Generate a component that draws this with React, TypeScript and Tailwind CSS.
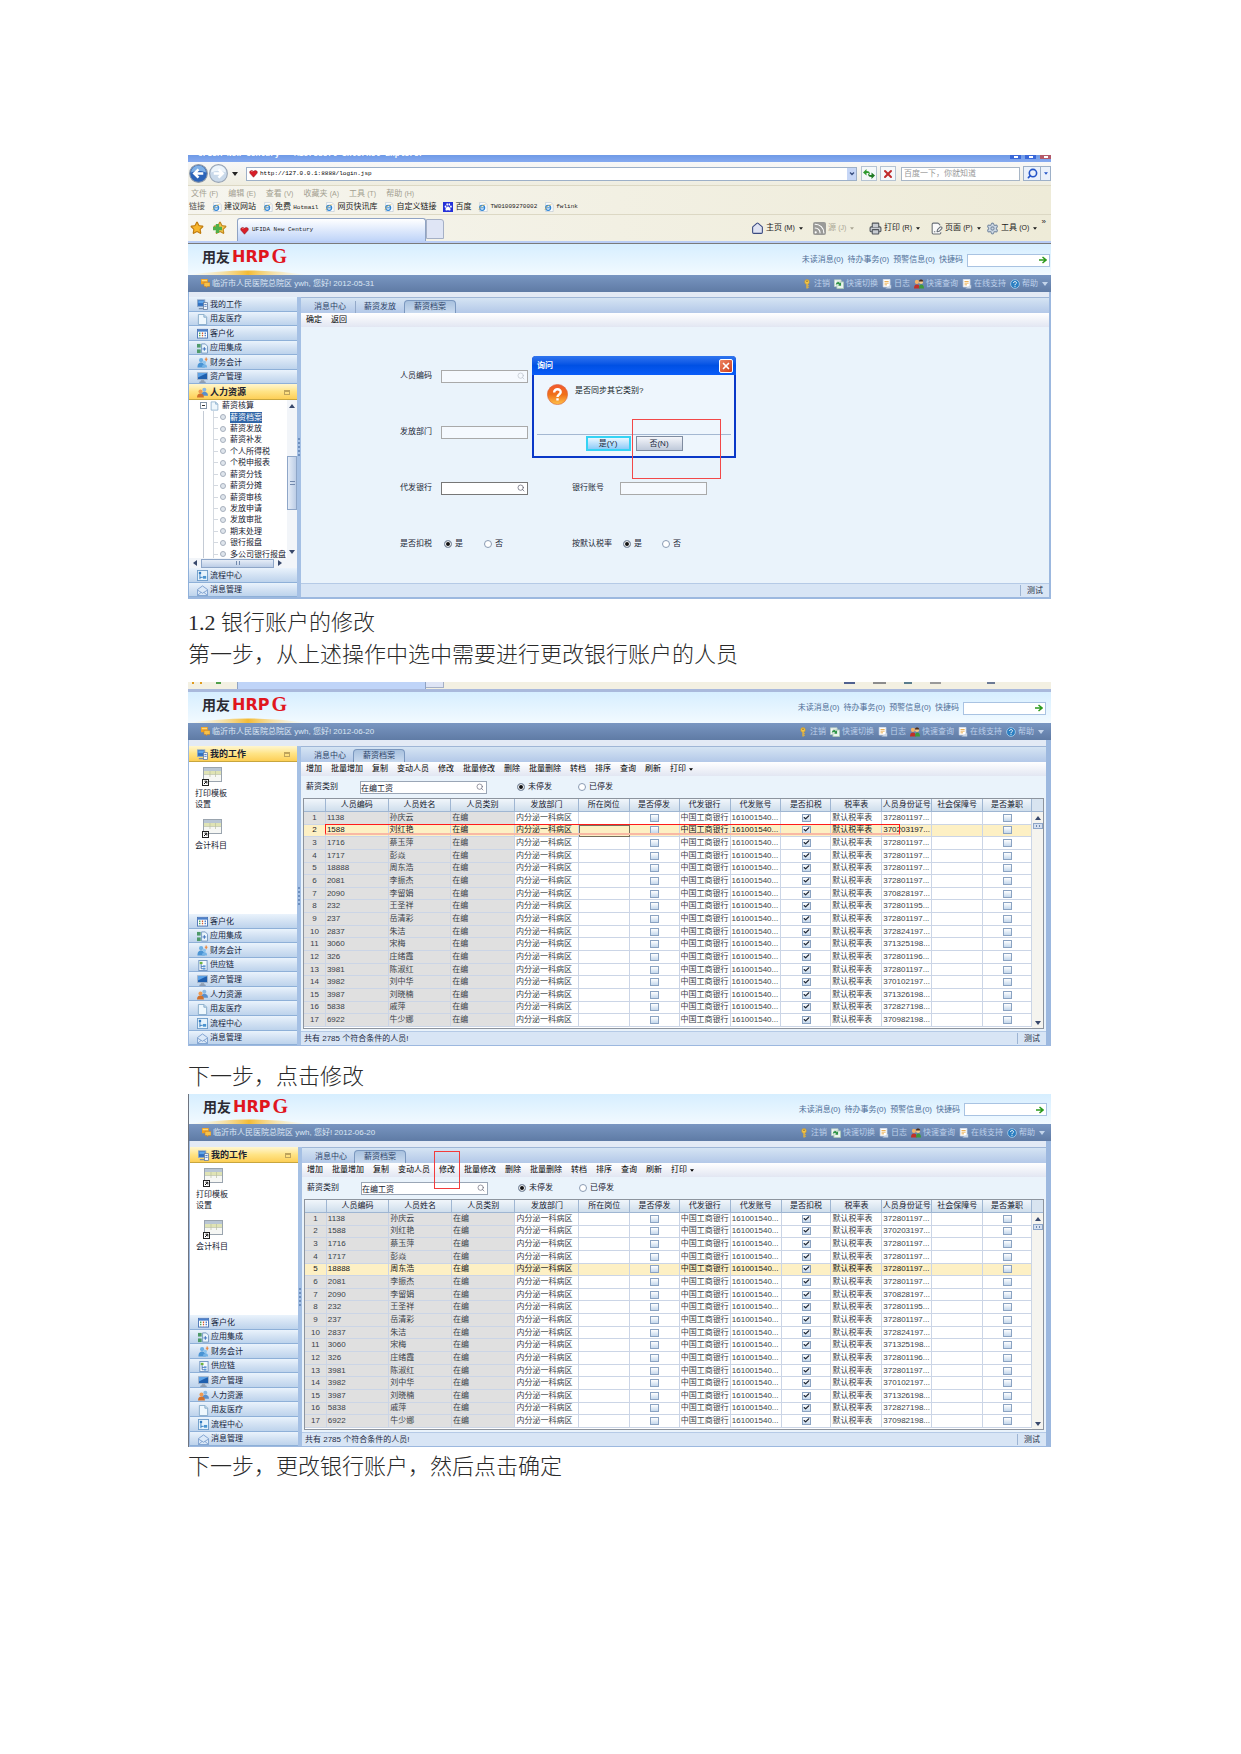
import React from 'react';
import { Home, Rss, Printer, Settings, FilePenLine, Search, Star, X, Check } from 'lucide-react';

type IconName =
  | 'work' | 'doc' | 'grid' | 'link' | 'finance' | 'supply' | 'asset' | 'people' | 'flow' | 'mail'
  | 'key' | 'switch' | 'note' | 'users' | 'help' | 'ie' | 'paw' | 'heart' | 'msg';

function Icon({ name, size = 'w-[11px] h-[11px]' }: { name: IconName; size?: string }) {
  const shapes: Record<IconName, React.ReactNode> = {
    work: (
      <>
        <rect x="0.5" y="1" width="8" height="7" fill="#2f6fc0" stroke="#8ba6c8" />
        <path d="M1.5 2h6v2.5h-6z" fill="#5fa4e8" />
        <rect x="7" y="4" width="4.5" height="7.5" fill="#f2f6fb" stroke="#5b7397" strokeWidth=".8" />
        <path d="M8 6h2.5M8 8h2.5" stroke="#4a7ac0" />
        <path d="M2 10.5h5" stroke="#7a8ca8" strokeWidth="1.4" />
      </>
    ),
    doc: (
      <>
        <path d="M1.5.5h6l3 3v8h-9z" fill="#eef7fd" stroke="#86aac8" />
        <path d="M7.500.5v3h3" fill="#c5dced" stroke="#86aac8" />
      </>
    ),
    grid: (
      <>
        <rect x=".5" y="1.500" width="11" height="9.5" fill="#fff" stroke="#4a74b5" />
        <path d="M1 2h10v2H1z" fill="#4a80cc" />
        <path d="M3 5v5" stroke="#3a9a50" strokeWidth="1.400" strokeDasharray="1.5 .8" />
        <path d="M6 5v5" stroke="#d05a30" strokeWidth="1.400" strokeDasharray="1.5 .8" />
        <path d="M9 5v5" stroke="#3a6fc4" strokeWidth="1.400" strokeDasharray="1.5 .8" />
      </>
    ),
    link: (
      <>
        <path d="M5 1h4l2.500 2.500V11H5z" fill="#eaf4fc" stroke="#7397c0" />
        <rect x="0" y="1" width="4" height="4" fill="#4f9a6a" />
        <rect x="0" y="7" width="4" height="4" fill="#4f9a6a" />
        <path d="M6 6.500h4M8 4.500v4" stroke="#3269b8" />
      </>
    ),
    finance: (
      <>
        <circle cx="4.500" cy="3.500" r="2.300" fill="#6fb0e4" />
        <path d="M.5 11.500c0-4 1.500-5.500 4-5.500s4 1.500 4 5.500z" fill="#4a94d4" />
        <circle cx="8" cy="6" r="1.800" fill="#8cc4ee" />
        <path d="M5.500 11.500c0-2.500 1-3.500 2.800-3.500s2.700 1 2.700 3.500z" fill="#72b2e6" />
        <path d="M10 .5v4M8.500 2.500h3" stroke="#e8823a" strokeWidth="1.200" />
      </>
    ),
    supply: (
      <>
        <rect x="2" y=".5" width="9" height="11" fill="#f4f9fd" stroke="#6f93c0" />
        <rect x="3" y="2" width="3" height="2.500" fill="#6db33f" />
        <path d="M4.500 4.500v5h2M4.500 7h2" stroke="#4b75b0" fill="none" />
        <rect x="6.500" y="5.800" width="2.800" height="2" fill="#5c97d6" />
        <rect x="6.500" y="8.500" width="2.800" height="2" fill="#5c97d6" />
      </>
    ),
    asset: (
      <>
        <rect x=".5" y=".8" width="11" height="7.500" fill="#1f5fae" stroke="#a9b9cd" />
        <path d="M1 1.200h10L1 6z" fill="#5da2e6" />
        <path d="M4.500 8.500h3l1 2.500h-5z" fill="#9aa8ba" />
        <path d="M2.500 11.200h7" stroke="#74859c" />
      </>
    ),
    people: (
      <>
        <circle cx="8" cy="3" r="2.200" fill="#8ab8e4" />
        <path d="M4.500 9.500C4.500 6.500 6 5.300 8 5.300s4 1.200 4 4.200z" fill="#5a8fcc" />
        <circle cx="3.800" cy="5" r="2.200" fill="#ef9a50" />
        <path d="M0 11.500C0 8.500 1.300 7 3.800 7s3.700 1.500 3.700 4.500z" fill="#d0702c" />
      </>
    ),
    flow: (
      <>
        <rect x=".5" y=".5" width="11" height="11" fill="#e6f3fc" stroke="#6e9cc9" />
        <rect x="2" y="2" width="2.500" height="2.500" fill="#2f7ac0" />
        <path d="M3.200 4.500V10M3.200 8h3" stroke="#2f7ac0" fill="none" />
        <rect x="6.500" y="6.500" width="3.500" height="3" fill="#4a94d0" />
      </>
    ),
    mail: (
      <>
        <path d="M.5 5 6 1l5.500 4v6.500H.5z" fill="#dbe9f8" stroke="#7c9fce" />
        <path d="M.5 5.500 6 9l5.500-3.500M.5 11.500 4.500 8M11.500 11.500 7.500 8" stroke="#7c9fce" fill="none" />
      </>
    ),
    key: (
      <>
        <circle cx="6" cy="3.500" r="2.800" fill="#f1c64a" stroke="#c8922a" strokeWidth=".7" />
        <circle cx="6" cy="2.800" r=".9" fill="#8a6a20" />
        <path d="M5.200 6h1.800v5.500H5.200z" fill="#e8b53a" />
        <path d="M7 8h1.500M7 10h1.500" stroke="#e8b53a" />
      </>
    ),
    switch: (
      <>
        <path d="M.5 1h8v8h-8z" fill="#f5faf5" stroke="#b9d0c4" />
        <path d="M3.500 3.500h8v8h-8z" fill="#e9f4ec" stroke="#a8c7b4" />
        <path d="M2 7c1-4 4-4 5-2l1.500-1v4H5l1-1.200C5 5.500 3.500 6 2 7z" fill="#2f9446" />
      </>
    ),
    note: (
      <>
        <path d="M1.500.5h8v9h-8z" fill="#fff" stroke="#dfe4ec" />
        <path d="M3 3h5M3 5h5M3 7h3" stroke="#e6a23a" />
        <path d="M4 11.500h7V7z" fill="#c8d4e4" />
      </>
    ),
    users: (
      <>
        <circle cx="3.500" cy="3.500" r="2.500" fill="#f3b46a" />
        <path d="M0 11.500C0 8 1 6.500 3.500 6.500S7 8 7 11.500z" fill="#c03028" />
        <circle cx="8.500" cy="3.500" r="2.500" fill="#f5c88a" />
        <path d="M6 2c1-2 4-2 5 0v1H6z" fill="#4a2a18" />
        <path d="M6 11.500C6 8 7 6.500 8.800 6.500S12 8 12 11.500z" fill="#3f9a3a" />
      </>
    ),
    help: (
      <>
        <circle cx="6" cy="6" r="5.300" fill="#2b7fc2" stroke="#a9cdea" />
        <path d="M4.300 4.800C4.300 2.300 8 2.600 7.700 4.800 7.500 6 6 5.900 6 7.500M6 8.600v1" stroke="#fff" strokeWidth="1.200" fill="none" />
      </>
    ),
    ie: (
      <>
        <path d="M2 .5h6l3 2.500v8.500H2z" fill="#fbfcfd" stroke="#a8b8c8" strokeWidth=".6" />
        <circle cx="5" cy="7" r="3" fill="none" stroke="#2f86d6" strokeWidth="1.500" />
        <path d="M2.500 7h5" stroke="#2f86d6" strokeWidth="1.200" />
        <path d="M1 9.500C2 6 6 3 9 3.200" stroke="#d9b24a" fill="none" strokeWidth=".8" />
      </>
    ),
    paw: (
      <>
        <rect width="12" height="12" fill="#2430d8" />
        <ellipse cx="3" cy="5.500" rx="1" ry="1.400" fill="#fff" />
        <ellipse cx="5" cy="3" rx="1" ry="1.400" fill="#fff" />
        <ellipse cx="7.500" cy="3" rx="1" ry="1.400" fill="#fff" />
        <ellipse cx="9.500" cy="5.500" rx="1" ry="1.400" fill="#fff" />
        <path d="M6 5.500c1.500 0 3.500 2.500 3 4-.5 1-2 .5-3 .5s-2.500.5-3-.5c-.5-1.500 1.500-4 3-4z" fill="#fff" />
      </>
    ),
    heart: (
      <>
        <path d="M6 11 1.500 6C-.5 3 3 .5 6 3c3-2.500 6.500 0 4.500 3z" fill="#d81e28" stroke="#7c1016" strokeWidth=".6" />
        <path d="M3 3.500c.5-.6 1.300-.6 1.800-.2" stroke="#ff9a9a" fill="none" />
      </>
    ),
    msg: (
      <>
        <path d="M0 0h9v7H0z" fill="#f0a020" />
        <path d="M1 1h7v2H1z" fill="#ffd978" />
        <path d="M4 4.500h8V10H8.500L7 12v-2H4z" fill="#f6c14a" stroke="#c4771a" strokeWidth=".6" />
      </>
    ),
  };
  return (
    <svg viewBox="0 0 12 12" className={`${size} shrink-0`} aria-hidden="true">
      {shapes[name]}
    </svg>
  );
}

const Caret = ({ dir = 'down', className = 'text-[#38486b]' }: { dir?: 'down' | 'up' | 'left' | 'right'; className?: string }) => {
  const d = { down: 'M0 1h6L3 5z', up: 'M0 5h6L3 1z', left: 'M5 0v6L1 3z', right: 'M1 0v6l4-3z' }[dir];
  return (
    <svg viewBox="0 0 6 6" className={`h-[6px] w-[6px] shrink-0 ${className}`} aria-hidden="true">
      <path d={d} fill="currentColor" />
    </svg>
  );
};

/* ---------- shared application chrome ---------- */

function AppHeader({ date, height, right }: { date: string; height: string; right: string }) {
  return (
    <header>
      <div className={`flex items-center overflow-hidden bg-gradient-to-b from-[#d6eeff] to-[#f2faff] ${height} ${right}`}>
        <div className="relative flex h-full flex-1 items-center gap-[2px] pb-[5px] pl-[14px] leading-[20px]">
          <svg viewBox="0 0 140 6" preserveAspectRatio="none" className="absolute bottom-0 left-0 h-[5px] w-[120px]" aria-hidden="true">
            <defs>
              <linearGradient id="glow" x1="0" x2="1">
                <stop offset="0" stopColor="#fff3cf" stopOpacity="0.1" />
                <stop offset=".5" stopColor="#f3bb35" />
                <stop offset="1" stopColor="#fff3cf" stopOpacity="0.1" />
              </linearGradient>
            </defs>
            <path d="M0 6Q70-5 140 6z" fill="url(#glow)" />
          </svg>
          <span className="relative text-[14px] font-bold text-[#2b2b33]">用友</span>
          <span className="relative flex items-center text-[#e0161e]">
            <b className="font-['DejaVu_Sans',sans-serif] text-[16px]">HRP</b>
            <span className="pb-[2px] pl-[2px] font-['Liberation_Serif',serif] text-[20px] font-bold">G</span>
          </span>
        </div>
        <nav className="flex shrink-0 items-center gap-[4px] pt-[1px] text-[#4f6f98]">
          <a href="#unread">未读消息(0)</a>
          <a href="#todo">待办事务(0)</a>
          <a href="#alert">预警信息(0)</a>
          <label className="flex items-center gap-[4px]">
            快捷码
            <span className="flex h-[13px] w-[83px] items-center border border-[#a9c3e2] bg-white pr-[2px]">
              <input type="text" className="h-full w-full min-w-0 outline-none" />
              <svg viewBox="0 0 8 8" className="h-[8px] w-[8px] shrink-0" aria-hidden="true">
                <path d="M0 4h6M3.500 1 7 4 3.500 7" stroke="#2c9a1c" strokeWidth="1.500" fill="none" />
              </svg>
            </span>
          </label>
        </nav>
      </div>
      <div className={`flex h-[17px] items-center justify-between bg-gradient-to-b from-[#7996c1] to-[#5f7ba5] pl-[13px] text-[#dbe6f4] ${right}`}>
        <span className="flex items-center gap-[2px]">
          <Icon name="msg" size="w-[9px] h-[9px]" />
          <span>临沂市人民医院总院区 ywh, 您好! {date}</span>
        </span>
        <nav className="flex items-center gap-[4px] text-[#bdd0ea]">
          {([['key', '注销'], ['switch', '快速切换'], ['note', '日志'], ['users', '快速查询'], ['note', '在线支持'], ['help', '帮助']] as [IconName, string][]).map(([icon, label]) => (
            <a key={label} href={`#${icon}`} className="flex items-center gap-[2px]">
              <Icon name={icon} size="w-[10px] h-[10px]" />
              {label}
            </a>
          ))}
          <Caret className="mr-[2px] text-[#c3d4ea]" />
        </nav>
      </div>
    </header>
  );
}

function NavItem({ icon, label }: { icon: IconName; label: string }) {
  return (
    <button className="flex w-full flex-1 items-center gap-[2px] border-b border-[#8eb0d8] bg-gradient-to-b from-[#eaf3fc] via-[#d3e2f3] to-[#bdd3ec] pl-[8px] pt-[2px] leading-[10px] text-[#16243c]">
      <Icon name={icon} />
      {label}
    </button>
  );
}

function NavHead({ icon, label }: { icon: IconName; label: string }) {
  return (
    <button className="flex h-[16px] w-full shrink-0 items-center gap-[2px] border-b border-[#c8a63e] bg-gradient-to-b from-[#fff6cf] via-[#ffe486] to-[#fdcf55] pl-[8px] pr-[7px] pt-[1px] text-[9px] font-bold leading-[12px] text-[#1c2230]">
      <Icon name={icon} />
      <span className="flex-1 text-left">{label}</span>
      <span className="h-[5px] w-[6px] border border-t-2 border-[#bfa45c]" />
    </button>
  );
}

function Splitter() {
  return (
    <div className="flex w-[4px] shrink-0 items-center justify-center bg-[#a5c0e4]">
      <span className="h-[18px] border-l-2 border-dotted border-[#6d8fbe]" />
    </div>
  );
}

function Tabs({ idle, active }: { idle: string[]; active: string }) {
  return (
    <div className="flex h-[15px] shrink-0 items-end bg-gradient-to-b from-[#d5e4f3] to-[#b3c8e8] pl-[13px] leading-[12px] text-[#2e4468]">
      {idle.map((t, i) => (
        <button key={t} className={i ? 'ml-[2px] flex items-center border-l border-[#93a9c9] px-[8px]' : 'pr-[7px]'}>
          {t}
        </button>
      ))}
      <button className="h-[13px] w-[52px] rounded-t-sm border border-b-0 border-[#7b98bf] bg-gradient-to-b from-[#a8c1de] to-[#c9daef]">{active}</button>
    </div>
  );
}

function Radio({ name, label, on }: { name: string; label: string; on?: boolean }) {
  return (
    <label className="flex items-center gap-[3px]">
      <input
        type="radio"
        name={name}
        defaultChecked={on}
        className="h-[8px] w-[8px] appearance-none rounded-full border border-[#8a9bb3] bg-white checked:bg-[#111] checked:shadow-[inset_0_0_0_1px_#fff]"
      />
      {label}
    </label>
  );
}

function StatusBar({ text }: { text?: string }) {
  return (
    <footer className="flex h-[14px] shrink-0 items-center justify-between border-t border-[#b5cae6] bg-[#d8e5f5] pl-[3px] text-[#1f2c44]">
      <span>{text}</span>
      <span className="border-l border-[#9db4d3] px-[6px] leading-[11px]">测试</span>
    </footer>
  );
}

/* ---------- browser chrome ---------- */

function LinkItem({ icon, label }: { icon: IconName; label: string }) {
  return (
    <a href="#link" className="flex items-center gap-[2px] whitespace-nowrap">
      <Icon name={icon} size="w-[10px] h-[10px]" />
      {label}
    </a>
  );
}

const mono = "font-['Liberation_Mono','Noto_Sans_CJK_SC',monospace]";

function BrowserChrome() {
  return (
    <div className="bg-[#f1eede] text-[#1b1b1b]">
      <div className="flex h-[7px] items-start justify-between overflow-hidden bg-gradient-to-b from-[#6f9ae6] to-[#86aaf0] pl-[10px]">
        <span className={`${mono} -mt-[5px] text-[8px] font-bold leading-[8px] text-white`}>UFIDA New Century - Microsoft Internet Explorer</span>
        <span className="flex h-[5px] items-start gap-[4px] self-start">
          <span className="flex h-[4px] w-[11px] items-center justify-center bg-[#3a68d8]"><i className="h-[2px] w-[4px] bg-white" /></span>
          <span className="flex h-[4px] w-[11px] items-center justify-center bg-[#3a68d8]"><i className="h-[2px] w-[4px] bg-white" /></span>
          <span className="flex h-[4px] w-[11px] items-center justify-center bg-[#b45a6a]"><i className="h-[2px] w-[4px] bg-white" /></span>
        </span>
      </div>
      <div className="flex h-[24px] items-center border-b border-[#dcd8c4] bg-gradient-to-b from-[#f8f8f8] to-[#efede0] pl-[1px]">
        <button aria-label="后退">
          <svg viewBox="0 0 18 18" className="h-[19px] w-[19px]" aria-hidden="true">
            <circle cx="9" cy="9" r="8.400" fill="#2c64b8" stroke="#8c98a8" />
            <path d="M2 8a7 6.500 0 0 1 14 0q-7-3-14 0z" fill="#7fb0e6" />
            <path d="M13.500 9H5.500M9 5 5 9l4 4" stroke="#fff" strokeWidth="2.400" fill="none" />
          </svg>
        </button>
        <button aria-label="前进" className="ml-[1px]">
          <svg viewBox="0 0 18 18" className="h-[19px] w-[19px]" aria-hidden="true">
            <circle cx="9" cy="9" r="8.400" fill="#c9d9ea" stroke="#98a4b4" />
            <path d="M2 8a7 6.500 0 0 1 14 0q-7-3-14 0z" fill="#eef5fb" />
            <path d="M4.500 9h8M9 5l4 4-4 4" stroke="#fff" strokeWidth="2.400" fill="none" />
          </svg>
        </button>
        <span className="flex w-[14px] justify-center"><Caret className="text-[#222]" /></span>
        <label className="ml-[4px] flex h-[14px] min-w-0 flex-1 items-center gap-[2px] border border-[#9db0c8] bg-white pl-[2px]">
          <Icon name="heart" size="w-[9px] h-[9px]" />
          <input aria-label="地址" defaultValue="http://127.0.0.1:8888/login.jsp" className={`${mono} h-full min-w-0 flex-1 text-[6px] text-black outline-none`} />
          <span className="flex h-[12px] w-[9px] items-center justify-center bg-[#c6d6f6]">
            <svg viewBox="0 0 6 6" className="h-[6px] w-[6px]" aria-hidden="true"><path d="M1 1.500l2 2 2-2" stroke="#3a5080" strokeWidth="1.300" fill="none" /></svg>
          </span>
        </label>
        <button aria-label="刷新" className="ml-[4px] flex h-[15px] w-[16px] items-center justify-center border border-[#b5c3d2] bg-[#f5f8fa]">
          <svg viewBox="0 0 12 12" className="h-[12px] w-[12px]" aria-hidden="true">
            <path d="M0 4.500 3.500 1v2C6 3 7 4 7 6.500 6 5.200 5 5 3.500 5v2.500z" fill="#2f9a2f" />
            <path d="M12 7.500 8.500 11V9C6 9 5 8 5 5.500 6 6.800 7 7 8.500 7V4.500z" fill="#1f7a22" />
          </svg>
        </button>
        <button aria-label="停止" className="ml-[3px] flex h-[15px] w-[16px] items-center justify-center border border-[#b5c3d2] bg-[#f5f8fa]">
          <X className="h-[12px] w-[12px] text-[#c02a2a]" strokeWidth={4} />
        </button>
        <input aria-label="搜索" placeholder="百度一下，你就知道" className="ml-[5px] h-[14px] w-[119px] border border-[#a8b6c6] bg-white px-[2px] placeholder:text-[#999]" />
        <button aria-label="搜索按钮" className="ml-[3px] flex h-[15px] w-[18px] items-center justify-center border border-[#9db0c8] bg-[#eaf1fb]">
          <Search className="h-[11px] w-[11px] -scale-x-100 text-[#2556c8]" strokeWidth={3.5} />
        </button>
        <button aria-label="搜索选项" className="flex h-[15px] w-[10px] items-center justify-center border border-l-0 border-[#9db0c8] bg-[#eaf1fb]">
          <svg viewBox="0 0 5 3" className="h-[3px] w-[4px] text-[#2556c8]" aria-hidden="true"><path d="M0 0h5L2.500 3z" fill="currentColor" /></svg>
        </button>
      </div>
      <div className="flex h-[29px] flex-col justify-end border-b border-[#dcd8c4] bg-gradient-to-r from-[#f6f5ee] to-[#eeebd8]">
        <div className="flex h-[13px] items-center gap-[10px] pl-[3px] text-[#a39f90]">
          {['文件', '编辑', '查看', '收藏夹', '工具', '帮助'].map((m, i) => (
            <button key={m}>{m} <span className="text-[7px]">({'FEVATH'[i]})</span></button>
          ))}
        </div>
        <div className="flex h-[14px] items-center gap-[7px] pl-[1px]">
          <span className="text-[#555]">链接</span>
          <LinkItem icon="ie" label="建议网站" />
          <a href="#hotmail" className="flex items-center gap-[2px]">
            <Icon name="ie" size="w-[10px] h-[10px]" />
            <span>免费 <span className={`${mono} text-[6px]`}>Hotmail</span></span>
          </a>
          <LinkItem icon="ie" label="网页快讯库" />
          <LinkItem icon="ie" label="自定义链接" />
          <LinkItem icon="paw" label="百度" />
          <span className={`flex gap-[7px] text-[6px] ${mono}`}>
            <LinkItem icon="ie" label="TW01009270002" />
            <LinkItem icon="ie" label="fwlink" />
          </span>
        </div>
      </div>
      <div className="flex h-[26px] items-end bg-gradient-to-r from-[#f6f5ee] to-[#eeebd8]">
        <span className="flex h-full w-[49px] items-center gap-[9px] pl-[2px]">
          <Star className="h-[14px] w-[14px] fill-[#f8b62c] text-[#c07c10]" />
          <span className="relative">
            <Star className="h-[14px] w-[14px] fill-[#f8c64c] text-[#c08820]" />
            <svg viewBox="0 0 8 8" className="absolute left-0 top-[3px] h-[9px] w-[9px]" aria-hidden="true">
              <path d="M2.500 0h3v2.500H8v3H5.500V8h-3V5.500H0v-3h2.500z" fill="#4fb04a" />
            </svg>
          </span>
        </span>
        <button className={`flex h-[23px] w-[189px] items-center gap-[3px] rounded-t-[3px] border border-b-0 border-[#8fa3c4] bg-gradient-to-b from-white to-[#bfd4f8] pl-[2px] text-[6px] ${mono}`}>
          <Icon name="heart" size="w-[9px] h-[9px]" />
          UFIDA New Century
        </button>
        <button aria-label="新选项卡" className="mb-[2px] h-[20px] w-[18px] rounded-tr-[3px] border border-[#a5b0c6] bg-[#dfe5f5]" />
        <div className="ml-auto grid h-full grid-cols-[62px_56px_61px_56px_65px] items-center whitespace-nowrap">
          {[
            { Glyph: Home, label: '主页', key: 'M', tone: 'text-[#3a4a80] fill-[#dfe3f2]', text: '' },
            { Glyph: Rss, label: '源', key: 'J', tone: 'bg-[#9a9a98] text-white rounded-[2px]', text: 'text-[#aaa694]' },
            { Glyph: Printer, label: '打印', key: 'R', tone: 'text-[#50555c] fill-[#c8ccd2]', text: '' },
            { Glyph: FilePenLine, label: '页面', key: 'P', tone: 'text-[#6a7078] fill-[#fafafa]', text: '' },
            { Glyph: Settings, label: '工具', key: 'O', tone: 'text-[#7c8ea4] fill-[#cfdae6]', text: '' },
          ].map(({ Glyph, label, key, tone, text }) => (
            <button key={label} className={`flex items-center gap-[2px] ${text}`}>
              <Glyph className={`h-[13px] w-[13px] shrink-0 ${tone}`} />
              <span>{label} <span className="text-[7px]">({key})</span></span>
              <svg viewBox="0 0 5 3" className="ml-[2px] h-[3px] w-[4px] shrink-0" aria-hidden="true"><path d="M0 0h5L2.500 3z" fill="currentColor" /></svg>
              {key === 'O' && <span className="ml-[2px] pb-[12px] leading-[6px]">»</span>}
            </button>
          ))}
        </div>
      </div>
      <div className="h-[3px] border-b border-[#7a7a7a] bg-[#b9cdf6]" />
    </div>
  );
}

/* ---------- first window: form with dialog ---------- */

const treeItems = ['薪资档案', '薪资发放', '薪资补发', '个人所得税', '个税申报表', '薪资分钱', '薪资分摊', '薪资审核', '发放申请', '发放审批', '期末处理', '银行报盘', '多公司银行报盘'];

function SalaryTree() {
  return (
    <>
      <div className="flex h-[158px] overflow-hidden bg-white">
        <div className="flex h-[160px] min-w-0 flex-1 flex-col overflow-hidden whitespace-nowrap leading-[11px] text-[#16202f]">
          <div className="flex flex-1 items-center gap-[3px] pl-[11px]">
            <svg viewBox="0 0 7 7" className="h-[7px] w-[7px]" aria-hidden="true">
              <rect x=".5" y=".5" width="6" height="6" fill="#fff" stroke="#8796a8" />
              <path d="M2 3.500h3" stroke="#333" />
            </svg>
            <Icon name="doc" size="w-[9px] h-[10px]" />
            薪资核算
          </div>
          {treeItems.map((t, i) => (
            <div key={t} className="ml-[14px] flex flex-1 items-center border-l border-[#c4cbd5] pl-[9px]">
              <span className="h-full w-[1px] shrink-0 bg-[#d4d9e0]" />
              <span className="h-[1px] w-[4px] shrink-0 bg-[#d4d9e0]" />
              <span className="ml-[2px] h-[6px] w-[6px] shrink-0 rounded-full border border-[#a7b0bd] bg-[#dfe5ec]" />
              <button className={i === 0 ? 'ml-[4px] bg-[#2f64a6] text-white' : 'ml-[4px]'}>{t}</button>
            </div>
          ))}
        </div>
        <div className="flex h-[158px] w-[10px] shrink-0 flex-col items-center bg-[#f2f5f9] py-[3px]">
          <Caret dir="up" />
          <div className="mt-[47px] flex h-[54px] w-[10px] items-center justify-center border border-[#8ea6c8] bg-gradient-to-r from-[#e6edf7] to-[#bccde6]">
            <span className="h-[4px] w-[5px] border-y border-[#7289ad]" />
          </div>
          <span className="mt-auto"><Caret /></span>
        </div>
      </div>
      <div className="flex h-[10px] items-center gap-[3px] bg-[#f2f5f9] pl-[3px]">
        <Caret dir="left" />
        <div className="flex h-[9px] w-[73px] items-center justify-center border border-[#8ea6c8] bg-gradient-to-b from-[#e6edf7] to-[#bccde6]">
          <span className="h-[4px] w-[4px] border-x border-[#7289ad]" />
        </div>
        <Caret dir="right" />
      </div>
    </>
  );
}

function Field({ label, disabled, search, first }: { label: string; disabled?: boolean; search?: boolean; first?: boolean }) {
  return (
    <label className="flex items-center">
      <span className={first ? 'w-[41px] shrink-0' : 'w-[48px] shrink-0'}>{label}</span>
      <span className={`flex h-[13px] w-[87px] items-center border pr-[2px] ${disabled ? 'border-[#a9a9a9] bg-[#f5f9fe]' : 'border-[#777] bg-white'}`}>
        <input type="text" disabled={disabled} className="h-full w-full min-w-0 bg-transparent outline-none" />
        {search && <Search className={`h-[8px] w-[8px] shrink-0 ${disabled ? 'text-[#b9c0c8]' : 'text-[#556]'}`} />}
      </span>
    </label>
  );
}

function ConfirmDialog() {
  return (
    <div role="dialog" aria-label="询问" className="absolute left-[231px] top-[29px] h-[102px] w-[204px] rounded-t-[4px] border-2 border-t-0 border-[#0a38c8] bg-[#eef6fd]">
      <div className="-mx-[2px] flex h-[19px] items-center justify-between rounded-t-[4px] bg-gradient-to-b from-[#2f74ee] via-[#0050e4] to-[#0a5cf8] pl-[5px] pr-[3px] font-bold text-white">
        询问
        <button aria-label="关闭" className="flex h-[14px] w-[14px] items-center justify-center rounded-[2px] border border-white bg-gradient-to-br from-[#ee8462] to-[#cc3c18]">
          <X className="h-[10px] w-[10px] text-white" strokeWidth={4} />
        </button>
      </div>
      <div className="flex h-[59px] gap-[7px] pl-[13px] pt-[9px]">
        <svg viewBox="0 0 20 20" className="h-[21px] w-[21px] shrink-0" aria-hidden="true">
          <defs>
            <linearGradient id="ask" x2="0" y2="1">
              <stop offset="0" stopColor="#f25a32" />
              <stop offset=".5" stopColor="#f07018" />
              <stop offset="1" stopColor="#ffc24a" />
            </linearGradient>
          </defs>
          <circle cx="10" cy="10" r="9.600" fill="url(#ask)" stroke="#d8603a" strokeWidth=".6" />
          <path d="M6.800 8C6.800 3.700 13.500 4.200 13 8c-.3 2-3 2-3 4.300M10 13.600v2.200" stroke="#fff" strokeWidth="2.300" fill="none" />
        </svg>
        <p className="pt-[1px] text-[#141c28]">是否同步其它类别?</p>
      </div>
      <div className="mx-[3px] flex justify-center gap-[5px] border-t border-[#a4b8d2] pt-[1px] text-[#1c2a40]">
        <button className="h-[15px] w-[45px] border-2 border-[#35d3f4] bg-gradient-to-b from-[#eaf7ff] to-[#8ccbf8]">是(Y)</button>
        <button className="h-[15px] w-[47px] border border-[#7f8ca0] bg-gradient-to-b from-[#f4f6fa] to-[#bfc9da]">否(N)</button>
      </div>
      <div className="pointer-events-none absolute left-[98px] top-[63px] h-[60px] w-[89px] border border-[#f24848]" />
    </div>
  );
}

function FormWindow() {
  return (
    <figure className="overflow-hidden bg-[#e3eaf5]">
      <BrowserChrome />
      <AppHeader date="2012-05-31" height="h-[31px]" right="pr-[1px]" />
      <div className="flex border-b-2 border-r-2 border-[#9cb8df] border-l border-l-[#8fb0da] pt-[5px]">
        <aside className="flex w-[108px] shrink-0 flex-col">
          <div className="flex h-[87px] flex-col">
            <NavItem icon="work" label="我的工作" />
            <NavItem icon="doc" label="用友医疗" />
            <NavItem icon="grid" label="客户化" />
            <NavItem icon="link" label="应用集成" />
            <NavItem icon="finance" label="财务会计" />
            <NavItem icon="asset" label="资产管理" />
          </div>
          <NavHead icon="people" label="人力资源" />
          <SalaryTree />
          <div className="flex h-[29px] flex-col">
            <NavItem icon="flow" label="流程中心" />
            <NavItem icon="mail" label="消息管理" />
          </div>
        </aside>
        <Splitter />
        <main className="flex min-w-0 flex-1 flex-col border-t border-[#9fb6d6]">
          <Tabs idle={['消息中心', '薪资发放']} active="薪资档案" />
          <div className="flex h-[14px] shrink-0 items-center gap-[9px] bg-gradient-to-b from-white to-[#e2e6f2] pl-[5px] text-black">
            <button>确定</button>
            <button>返回</button>
          </div>
          <form className="relative flex-1 bg-[#eaf3fb] pt-[21px] text-[#1b2636]">
            <div className="grid auto-rows-[56px] grid-cols-[172px_1fr] items-center pl-[99px]">
              <Field label="人员编码" disabled search first />
              <span />
              <Field label="发放部门" disabled first />
              <span />
              <Field label="代发银行" search first />
              <Field label="银行账号" disabled />
              <div className="flex items-center">
                <span className="w-[44px]">是否扣税</span>
                <div className="flex gap-[21px]"><Radio name="tax" label="是" on /><Radio name="tax" label="否" /></div>
              </div>
              <div className="flex items-center">
                <span className="w-[51px]">按默认税率</span>
                <div className="flex gap-[20px]"><Radio name="rate" label="是" on /><Radio name="rate" label="否" /></div>
              </div>
            </div>
            <ConfirmDialog />
          </form>
          <StatusBar />
        </main>
      </div>
    </figure>
  );
}

/* ---------- list windows ---------- */

const people: [string, string, string][] = [
  ['1138', '孙庆云', '372801197...'],
  ['1588', '刘红艳', '370203197...'],
  ['1716', '蔡玉萍', '372801197...'],
  ['1717', '彭焱', '372801197...'],
  ['18888', '周东浩', '372801197...'],
  ['2081', '李振杰', '372801197...'],
  ['2090', '李留娟', '370828197...'],
  ['232', '王圣祥', '372801195...'],
  ['237', '岳清彩', '372801197...'],
  ['2837', '朱洁', '372824197...'],
  ['3060', '宋梅', '371325198...'],
  ['326', '庄绪霞', '372801196...'],
  ['3981', '陈淑红', '372801197...'],
  ['3982', '刘中华', '370102197...'],
  ['3987', '刘晓楠', '371326198...'],
  ['5838', '戚萍', '372827198...'],
  ['6922', '牛少娜', '370982198...'],
];

const columns: [string, string][] = [
  ['', 'w-[22px]'], ['人员编码', 'w-[63px]'], ['人员姓名', 'w-[63px]'], ['人员类别', 'w-[64px]'], ['发放部门', 'w-[64px]'],
  ['所在岗位', 'w-[51px]'], ['是否停发', 'w-[50px]'], ['代发银行', 'w-[51px]'], ['代发账号', 'w-[51px]'], ['是否扣税', 'w-[50px]'],
  ['税率表', 'w-[51px]'], ['人员身份证号', 'w-[50px]'], ['社会保障号', 'w-[51px]'], ['是否兼职', 'w-[49px]'],
];

function Tick({ on, label }: { on?: boolean; label: string }) {
  return (
    <span className="relative mx-auto block h-[8px] w-[9px]">
      <input type="checkbox" aria-label={label} defaultChecked={on} className="peer block h-[8px] w-[9px] appearance-none border border-[#8ba3c2] bg-gradient-to-b from-white to-[#c5d8ec]" />
      <Check className="pointer-events-none absolute left-[1px] top-0 hidden h-[7px] w-[7px] text-[#1d2430] peer-checked:block" strokeWidth={4} />
    </span>
  );
}

function StaffTable({ selected, marked }: { selected: number; marked?: boolean }) {
  const cell = 'border-b border-r border-[#cbd5e6] pl-[1px]';
  return (
    <div className="relative mx-[2px] flex h-[231px] shrink-0 overflow-hidden border border-[#8d949e] bg-white">
      <table className="h-[228px] min-w-0 flex-1 table-fixed border-separate border-spacing-0 whitespace-nowrap text-left leading-[10px] text-[#3a3f48]">
        <colgroup>{columns.map(([c, w]) => <col key={c} className={w} />)}</colgroup>
        <thead>
          <tr className="h-[13px]">
            {columns.map(([c]) => (
              <th key={c} className="border-b border-r border-[#9fb6d2] bg-gradient-to-b from-[#f1f6fb] to-[#cfdeec] text-center font-normal text-[#16202f]">{c}</th>
            ))}
          </tr>
        </thead>
        <tbody>
          {people.map(([code, name, id], i) => {
            const hot = i + 1 === selected;
            return (
              <tr key={code} className={hot ? 'bg-[#fdf0c4] text-[#16181c]' : ''}>
                <td className={`border-b border-r border-[#cbd5e6] text-center ${hot ? '' : 'bg-[#e0e0e0]'}`}>{i + 1}</td>
                <td className={`${cell} ${hot ? '' : 'bg-[#e0e0e0]'}`}>{code}</td>
                <td className={`${cell} ${hot ? '' : 'bg-[#e0e0e0]'}`}>{name}</td>
                <td className={`${cell} ${hot ? '' : 'bg-[#e0e0e0]'}`}>在编</td>
                <td className={cell}>内分泌一科病区</td>
                <td className={hot && marked ? 'border border-[#77705c]' : cell} />
                <td className={cell}><Tick label={`${name} 停发`} /></td>
                <td className={cell}>中国工商银行</td>
                <td className={cell}>161001540...</td>
                <td className={cell}><Tick on label={`${name} 扣税`} /></td>
                <td className={cell}>默认税率表</td>
                <td className={cell}>{id}</td>
                <td className={cell} />
                <td className={cell}><Tick label={`${name} 兼职`} /></td>
              </tr>
            );
          })}
        </tbody>
      </table>
      <div className="flex h-full w-[11px] shrink-0 flex-col items-center bg-[#f5f4ef] pb-[2px]">
        <span className="h-[13px] w-full shrink-0 border-b border-[#9fb6d2] bg-[#d8e4f0]" />
        <span className="mt-[3px]"><Caret dir="up" /></span>
        <span className="mt-[2px] flex h-[6px] w-[10px] items-center justify-center border border-[#8ea6c8] bg-[#d5e0f0]"><i className="h-[2px] w-[4px] border-x border-[#7289ad]" /></span>
        <span className="mt-auto"><Caret /></span>
      </div>
      {marked && <div className="pointer-events-none absolute left-[21px] top-[25px] h-[11px] w-[575px] border border-b-2 border-[#ff1a1a] border-b-[#f9b9a4]" />}
    </div>
  );
}

function Shortcut({ lines }: { lines: string[] }) {
  return (
    <a href="#shortcut" className="flex flex-col items-start">
      <svg viewBox="0 0 20 20" className="mb-[2px] ml-[7px] h-[20px] w-[20px]" aria-hidden="true">
        <rect x="1.500" y="1.500" width="18" height="14" fill="#f6f7f4" stroke="#9aa4ae" />
        <path d="M2 2h17v3H2z" fill="#b9c6d4" />
        <path d="M2 5h17v3H2z" fill="#dfe3b4" />
        <path d="M2 8.500h17M8 5v6M13.500 5v6" stroke="#b9bfa0" strokeWidth=".7" />
        <rect x=".5" y="13.500" width="6" height="6" fill="#fff" stroke="#222" />
        <path d="M2 18l2.500-2.500M2.500 15.200h2.300v2.300" stroke="#111" fill="none" />
      </svg>
      {lines.map((l) => <span key={l} className="leading-[11px]">{l}</span>)}
    </a>
  );
}

const actions = ['增加', '批量增加', '复制', '变动人员', '修改', '批量修改', '删除', '批量删除', '转档', '排序', '查询', '刷新'];

function ListWindow({ selected, markRow, markEdit, height, inset, name }: { selected: number; markRow?: boolean; markEdit?: boolean; height: string; inset: string; name: string }) {
  return (
    <div className="bg-[#e3eaf5]">
      <AppHeader date="2012-06-20" height={height} right={inset} />
      <div className="flex border-b border-l border-r-[5px] border-[#9cb8df] pt-[6px]">
        <aside className="flex h-[299px] w-[108px] shrink-0 flex-col">
          <NavHead icon="work" label="我的工作" />
          <div className="flex min-h-0 flex-1 flex-col gap-[8px] bg-white pl-[6px] pt-[4px] text-[#16202f]">
            <Shortcut lines={['打印模板', '设置']} />
            <Shortcut lines={['会计科目']} />
          </div>
          <div className="flex h-[131px] shrink-0 flex-col">
            <NavItem icon="grid" label="客户化" />
            <NavItem icon="link" label="应用集成" />
            <NavItem icon="finance" label="财务会计" />
            <NavItem icon="supply" label="供应链" />
            <NavItem icon="asset" label="资产管理" />
            <NavItem icon="people" label="人力资源" />
            <NavItem icon="doc" label="用友医疗" />
            <NavItem icon="flow" label="流程中心" />
            <NavItem icon="mail" label="消息管理" />
          </div>
        </aside>
        <Splitter />
        <main className="flex min-w-0 flex-1 flex-col border-t border-[#9fb6d6] bg-[#eaf3fb] text-[#16202f]">
          <Tabs idle={['消息中心']} active="薪资档案" />
          <div className="flex h-[14px] shrink-0 items-center gap-[9px] whitespace-nowrap bg-gradient-to-b from-white to-[#e2e6f2] pl-[5px] text-black">
            {actions.map((a) => (
              <button key={a} className="relative">
                {a}
                {markEdit && a === '修改' && <span className="pointer-events-none absolute -left-[5px] -top-[13px] h-[38px] w-[26px] border border-[#f23c3c]" />}
              </button>
            ))}
            <button className="flex items-center gap-[3px]">
              打印
              <svg viewBox="0 0 5 3" className="h-[3px] w-[4px]" aria-hidden="true"><path d="M0 0h5L2.500 3z" fill="currentColor" /></svg>
            </button>
          </div>
          <div className="flex h-[22px] shrink-0 items-center pl-[5px]">
            <label className="flex items-center">
              <span className="w-[54px]">薪资类别</span>
              <span className="flex h-[13px] w-[127px] items-center border border-[#9aa6b6] bg-white pr-[2px]">
                <input type="text" defaultValue="在编工资" className="h-full w-full min-w-0 outline-none" />
                <Search className="h-[8px] w-[8px] shrink-0 text-[#667]" />
              </span>
            </label>
            <div className="ml-[30px] flex gap-[26px]">
              <Radio name={name} label="未停发" on />
              <Radio name={name} label="已停发" />
            </div>
          </div>
          <StaffTable selected={selected} marked={markRow} />
          <div className="mt-auto"><StatusBar text="共有 2785 个符合条件的人员!" /></div>
        </main>
      </div>
    </div>
  );
}

function ChromeRemnant() {
  return (
    <div className="flex h-[10px] items-start overflow-hidden border-b-[3px] border-b-[#a9b9dc] bg-[#f3f0e2]">
      <span className="flex w-[49px] gap-[14px] pl-[4px]">
        <i className="h-[2px] w-[10px] border-x-2 border-[#e09a1c]" />
        <i className="h-[2px] w-[5px] bg-[#4fa04a]" />
      </span>
      <span className="h-[7px] w-[189px] border-x border-[#8fa3c4] bg-[#bfd4f8]" />
      <span className="h-[6px] w-[18px] border-b border-r border-[#a5b0c6] bg-[#dfe5f5]" />
      <span className="ml-auto flex gap-[18px] pr-[56px]">
        <i className="h-[2px] w-[11px] bg-[#50618f]" />
        <i className="h-[2px] w-[13px] bg-[#8c8c8c]" />
        <i className="h-[2px] w-[8px] bg-[#5a7c8c]" />
        <i className="h-[2px] w-[11px] bg-[#9a9a9a]" />
        <i className="ml-[28px] h-[2px] w-[8px] bg-[#6c7a94]" />
      </span>
    </div>
  );
}

export default function App() {
  const prose = "font-['Liberation_Serif','Noto_Sans_CJK_SC',serif] text-[22px] font-light leading-[32px] text-[#2a2a2a]";
  return (
    <article className="min-h-screen bg-white pb-[270px] pl-[188px] pr-[190px] pt-[155px] font-['Liberation_Sans','Noto_Sans_CJK_SC',sans-serif] text-[8px] leading-[12px]">
      <FormWindow />
      <div className={`pb-[11px] pt-[8px] ${prose}`}>
        <h2>1.2 银行账户的修改</h2>
        <p>第一步，从上述操作中选中需要进行更改银行账户的人员</p>
      </div>
      <figure>
        <ChromeRemnant />
        <ListWindow name="state-a" selected={2} markRow height="h-[31px]" inset="pr-[5px]" />
      </figure>
      <p className={`pb-[1px] pt-[15px] ${prose}`}>下一步，点击修改</p>
      <figure className="border-l border-[#6e7480]">
        <ListWindow name="state-b" selected={5} markEdit height="h-[30px]" inset="pr-[4px]" />
      </figure>
      <p className={`pt-[4px] ${prose}`}>下一步，更改银行账户，然后点击确定</p>
    </article>
  );
}
